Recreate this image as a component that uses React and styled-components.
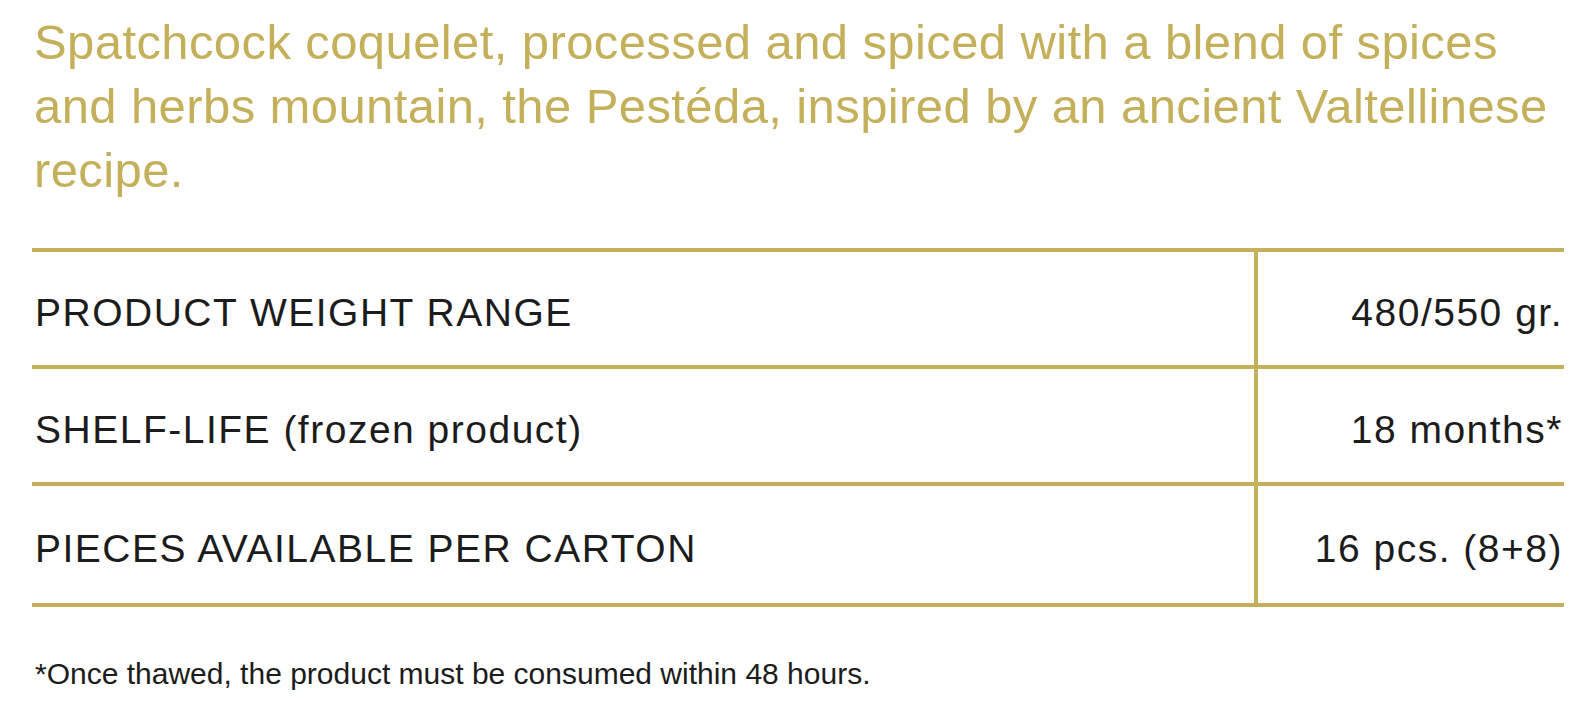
import React from "react";
import styled, { createGlobalStyle } from "styled-components";

const GOLD = "#c4af5a";

const GlobalStyle = createGlobalStyle`
  body {
    margin: 0;
    background: #fff;
    font-family: "Liberation Sans", Arial, sans-serif;
  }
`;

const Page = styled.div`
  width: 1532px;
  padding: 10px 0 0 32px;
`;

const Intro = styled.p`
  margin: 0 0 46px;
  padding-left: 2px;
  color: ${GOLD};
  font-size: 49px;
  letter-spacing: 0.4px;
  line-height: 64px;
`;

const SpecTable = styled.div`
  display: grid;
  grid-template-columns: 1fr 306px;
  border-bottom: 4px solid ${GOLD};
`;

const Cell = styled.div`
  display: flex;
  align-items: center;
  justify-content: ${(p) => (p.$value ? "flex-end" : "flex-start")};
  height: 105px;
  border-top: 4px solid ${GOLD};
  border-right: ${(p) => (p.$value ? "none" : `4px solid ${GOLD}`)};
  padding: ${(p) => (p.$value ? "8px 1px 0 0" : "8px 0 0 3px")};
  box-sizing: content-box;
  color: #1c1c1c;
  font-size: 39px;
  letter-spacing: 1.5px;

  &:nth-last-child(-n + 2) {
    height: 109px;
  }
`;

const Note = styled.p`
  margin: 50px 0 0;
  padding-left: 3px;
  color: #1c1c1c;
  font-size: 30px;
`;

const rows = [
  ["PRODUCT WEIGHT RANGE", "480/550 gr."],
  ["SHELF-LIFE (frozen product)", "18 months*"],
  ["PIECES AVAILABLE PER CARTON", "16 pcs. (8+8)"],
];

const App = () => {
  return (
    <Page>
      <GlobalStyle />
      <Intro>
        Spatchcock coquelet, processed and spiced with a blend of spices
        <br />
        and herbs mountain, the Pestéda, inspired by an ancient Valtellinese
        <br />
        recipe.
      </Intro>
      <SpecTable>
        {rows.map(([label, value]) => (
          <React.Fragment key={label}>
            <Cell>{label}</Cell>
            <Cell $value>{value}</Cell>
          </React.Fragment>
        ))}
      </SpecTable>
      <Note>*Once thawed, the product must be consumed within 48 hours.</Note>
    </Page>
  );
};

export default App;
